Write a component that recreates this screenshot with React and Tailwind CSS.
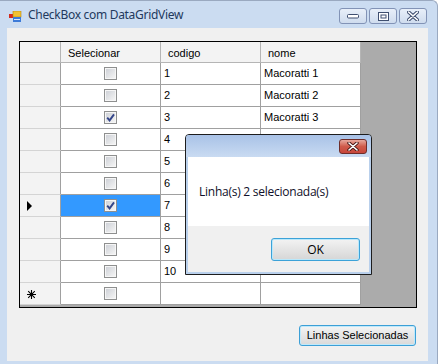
import React from "react";

function Check({ checked }) {
  return (
    <div className="w-[13px] h-[13px] border border-[#8e8f8f] bg-[#f6f6f6] p-[1px]">
      <div className="w-full h-full bg-gradient-to-br from-[#cfd2d8] to-[#f4f4f4] relative">
        {checked && (
          <svg width="11" height="11" viewBox="0 0 11 11" className="absolute -left-[1px] -top-[1px]">
            <path d="M2.2 5.6 L4.6 8.4 L9 2.4" fill="none" stroke="#34468a" strokeWidth="1.9" />
          </svg>
        )}
      </div>
    </div>
  );
}

function WinBtn({ children }) {
  return (
    <div className="w-[28px] h-[16px] rounded-[3px] border border-[#8293b6] bg-gradient-to-b from-[#e8eff9] to-[#cfdcee] flex items-center justify-center">
      {children}
    </div>
  );
}

export default function App() {
  const rows = [1, 2, 3, 4, 5, 6, 7, 8, 9, 10];
  const hidden = (n) => n >= 4 && n <= 9;
  return (
    <div className="w-[438px] h-[364px] relative overflow-hidden bg-[#cbdcf1] border-t border-r border-[#9aa9c0] rounded-tr-[6px] flex flex-col font-['Liberation_Sans',Arial,sans-serif] text-[11px] text-black">
      {/* Title bar */}
      <div className="h-[27px] shrink-0 flex items-start">
        <svg width="14" height="12" viewBox="0 0 14 12" className="ml-[8px] mt-[10px]">
          <rect x="1" y="3" width="4" height="4" fill="#d42a1e" />
          <rect x="5" y="0" width="8" height="6" fill="#f1c232" stroke="#b8860b" strokeWidth="0.6" />
          <rect x="5" y="6" width="8" height="5" fill="#3d7bd8" />
          <rect x="6" y="8" width="6" height="1" fill="#dbe8fb" />
        </svg>
        <span className="ml-[6px] mt-[6px] text-[12px] leading-[16px] tracking-[-0.3px] text-[#22395d] font-['Noto_Sans',sans-serif]">
          CheckBox com DataGridView
        </span>
        <div className="ml-auto mr-[10px] mt-[7px] flex gap-[2px]">
          <WinBtn>
            <svg width="12" height="5" viewBox="0 0 12 5">
              <rect x="0.5" y="0.5" width="11" height="3.5" rx="1" fill="#ffffff" stroke="#3f4f70" />
            </svg>
          </WinBtn>
          <WinBtn>
            <svg width="11" height="9" viewBox="0 0 11 9">
              <rect x="0.5" y="0.5" width="10" height="8" fill="#ffffff" stroke="#3f4f70" />
              <rect x="3" y="3" width="5" height="3" fill="none" stroke="#3f4f70" strokeWidth="1" />
            </svg>
          </WinBtn>
          <WinBtn>
            <svg width="12" height="10" viewBox="0 0 12 10">
              <path d="M1.5 1 L10.5 9 M10.5 1 L1.5 9" stroke="#3f4f70" strokeWidth="3.6" strokeLinecap="round" />
              <path d="M1.5 1 L10.5 9 M10.5 1 L1.5 9" stroke="#ffffff" strokeWidth="1.6" strokeLinecap="round" />
            </svg>
          </WinBtn>
        </div>
      </div>

      {/* Client area */}
      <div className="ml-[7px] w-[421px] h-[333px] bg-[#f0f0f0] pt-[13px] pl-[12px] flex flex-col">
        {/* DataGridView */}
        <div className="w-[398px] h-[267px] border border-black bg-[#ababab] flex flex-col">
          {/* header */}
          <div className="flex h-[21px]">
            <div className="w-[41px] h-full bg-[#f3f3f3] border-b border-r border-[#b5b5b5]" />
            {["Selecionar", "codigo", "nome"].map((h) => (
              <div key={h} className="w-[100px] h-full bg-[#f3f3f3] border-b border-r border-[#b5b5b5] flex items-center pl-[7px] pt-[2px]">
                {h}
              </div>
            ))}
          </div>
          {rows.map((n) => (
            <div key={n} className="flex h-[22px]">
              <div className="w-[41px] h-full bg-[#f3f3f3] border-b border-[#d4d4d4] border-r border-r-[#a0a0a0] flex items-center pl-[7px]">
                {n === 7 && (
                  <svg width="6" height="10" viewBox="0 0 6 10">
                    <polygon points="0,0 5,5 0,10" fill="#000" />
                  </svg>
                )}
              </div>
              <div className={`w-[100px] h-full border-b border-r border-[#a0a0a0] flex items-center justify-center ${n === 7 ? "bg-[#3399ff]" : "bg-white"}`}>
                <Check checked={n === 3 || n === 7} />
              </div>
              <div className="w-[100px] h-full bg-white border-b border-r border-[#a0a0a0] flex items-center pl-[3px]">
                {n}
              </div>
              <div className="w-[100px] h-full bg-white border-b border-r border-[#a0a0a0] flex items-center pl-[3px]">
                {hidden(n) ? "" : `Macoratti ${n}`}
              </div>
            </div>
          ))}
          {/* new row */}
          <div className="flex h-[22px]">
            <div className="w-[41px] h-full bg-[#f3f3f3] border-b border-[#d4d4d4] border-r border-r-[#a0a0a0] flex items-center pl-[7px] pt-[1px]">
              <svg width="9" height="9" viewBox="0 0 9 9">
                <path d="M4.5 0 V9 M0 4.5 H9 M1.2 1.2 L7.8 7.8 M7.8 1.2 L1.2 7.8" stroke="#000" strokeWidth="1.1" />
              </svg>
            </div>
            <div className="w-[100px] h-full bg-white border-b border-r border-[#a0a0a0] flex items-center justify-center">
              <Check checked={false} />
            </div>
            <div className="w-[100px] h-full bg-white border-b border-r border-[#a0a0a0]" />
            <div className="w-[100px] h-full bg-white border-b border-r border-[#a0a0a0]" />
          </div>
        </div>

        {/* Button */}
        <button className="mt-[17px] ml-[280px] w-[117px] h-[21px] rounded-[3px] border border-[#3c9fd6] bg-gradient-to-b from-[#f4f4f4] to-[#d9d9d9] shadow-[inset_0_0_0_1px_#bfe9fb] flex items-center justify-center text-[11px] text-black">
          Linhas Selecionadas
        </button>
      </div>

      {/* MessageBox */}
      <div className="absolute left-[185px] top-[133px] w-[187px] h-[141px] border border-[#1d1d1d] rounded-t-[4px] bg-[#b9d0ec] flex flex-col">
        <div className="h-[22px] shrink-0 rounded-t-[3px] bg-gradient-to-b from-[#a9c2e7] to-[#c9dbf2] flex justify-end items-start pt-[4px] pr-[4px]">
          <div className="w-[28px] h-[15px] rounded-[3px] border border-[#6e2d2a] bg-gradient-to-b from-[#e6a89e] via-[#cf5a4a] to-[#c7463a] flex items-center justify-center">
            <svg width="12" height="9" viewBox="0 0 12 9">
              <path d="M2 1 L10 8 M10 1 L2 8" stroke="#4a1a18" strokeWidth="3.4" strokeLinecap="round" />
              <path d="M2 1 L10 8 M10 1 L2 8" stroke="#ffffff" strokeWidth="1.6" strokeLinecap="round" />
            </svg>
          </div>
        </div>
        <div className="flex-1 mx-[2px] mb-[2px] flex flex-col">
          <div className="h-[69px] shrink-0 bg-white flex items-center pl-[11px] text-[12px] tracking-[-0.25px] text-[#10102a] font-['Open_Sans',sans-serif]">
            Linha(s) 2 selecionada(s)
          </div>
          <div className="flex-1 bg-[#f0f0f0] pt-[12px] pl-[83px]">
            <div className="w-[89px] h-[23px] rounded-[3px] border border-[#3ca2d8] bg-gradient-to-b from-[#f3f3f3] to-[#d6d6d6] shadow-[inset_0_0_0_1px_#b9e8fb] flex items-center justify-center text-[12px] text-black font-['Open_Sans',sans-serif]">
              OK
            </div>
          </div>
        </div>
      </div>
    </div>
  );
}
